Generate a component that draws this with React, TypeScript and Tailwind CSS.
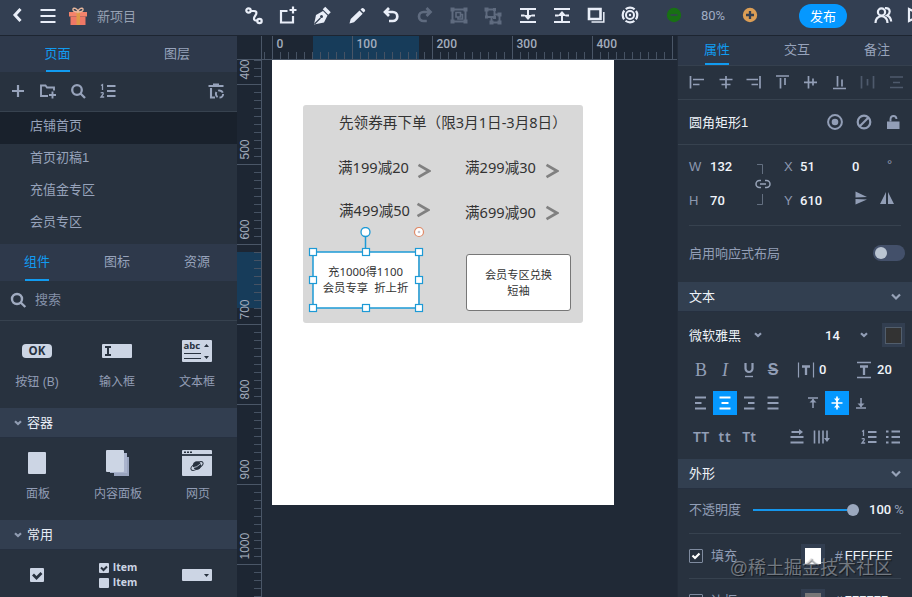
import React from 'react';
import { clsx } from 'clsx';

type IconProps = {
    children: React.ReactNode;
    className?: string;
    w?: number;
};

// Every glyph is drawn on a 24px grid at its real size
const Icon: React.FC<IconProps> = ({ children, className, w = 1.9 }) => (
    <svg width="24" height="24" viewBox="0 0 24 24" fill="none" stroke="currentColor" strokeWidth={w} className={clsx('shrink-0 overflow-visible', className)}>
        {children}
    </svg>
);

const solid = { fill: 'currentColor', stroke: 'none' };

const topTools = [
    { id: 'link', dim: false, art: <><circle cx="6.5" cy="6.5" r="2.200" strokeWidth="2.200" /><circle cx="17.500" cy="17" r="2.200" strokeWidth="2.200" /><path d="M8.700 7H12q3 0 2.200 3l-2 3.500q-.8 3 2 3H16" strokeWidth="2.200" /></> },
    { id: 'frame', dim: false, art: <path d="M11.500 7H5v11.500h12V12M17 2.500v7M13.500 6h7" strokeWidth="2.200" /> },
    { id: 'pen', dim: false, art: <><path d="M4 20.500l2-9.500 7-4 4.500 4.500-3.500 7z" {...solid} /><path d="M14 4l5.500 5.500" strokeWidth="3.500" /><path d="M4.500 20l6-6" stroke="#333f52" strokeWidth="1.200" /><circle cx="11.500" cy="12.500" r="1.500" fill="#333f52" stroke="none" /></> },
    { id: 'pencil', dim: false, art: <path d="M4.500 19.500l1.200-4.500 8.800-8.500 3.200 3.200-8.700 8.500zM15.500 5.500l1.300-1.200q1-.8 2 .2l1 1q.9 1-.1 1.900l-1.200 1.100z" {...solid} /> },
    { id: 'undo', dim: false, art: <path d="M10 4L6 8l4 4M6.500 8h7.300a4.500 4.500 0 0 1 0 9H10" strokeWidth="2.700" /> },
    { id: 'redo', dim: true, art: <path d="M13.500 4l4 4-4 4M17.500 8h-7a4.500 4.500 0 0 0 0 9h3.300" strokeWidth="2.700" /> },
    { id: 'group', dim: true, art: <><path d="M5.500 5.500h13v12h-13z" strokeWidth="2" /><path d="M3.500 3.500h4v4h-4zM16.500 3.500h4v4h-4zM3.500 15.500h4v4h-4zM16.500 15.500h4v4h-4z" {...solid} /><path d="M9 8.500h4.500V13H9zM14 10.500h1.500V15H11v-1.500" strokeWidth="1.600" /></> },
    { id: 'ungroup', dim: true, art: <><path d="M5.500 5.500h8v7.500h-8zM14 10.500h4.500v8h-8V14" strokeWidth="1.900" /><path d="M3.500 3.500h4v4h-4zM12 4h3v3h-3zM4 11.500h3v3H4zM12 12h3v3h-3zM16.500 8.500h4v4h-4zM8.500 16.500h4v4h-4zM16.500 16.500h4v4h-4z" {...solid} /></> },
    { id: 'bottom', dim: false, art: <><path d="M4 5h16M4 18h16M5 11.500h3.500M15.500 11.500H19M12 5v9" strokeWidth="2" /><path d="M7.500 11h9L12 16z" {...solid} /></> },
    { id: 'top', dim: false, art: <><path d="M4 5h16M4 18h16M5 11.500h3.500M15.500 11.500H19M12 9v9" strokeWidth="2" /><path d="M7.500 12h9L12 7z" {...solid} /></> },
    { id: 'shadow', dim: false, art: <><path d="M5 5h11.500v10H5z" strokeWidth="2.600" /><path d="M7.500 18h12.300V8" strokeWidth="1.500" /></> },
    { id: 'target', dim: false, art: <><circle cx="12" cy="11" r="7.300" strokeDasharray="9.500 1.967" strokeDashoffset="4.750" strokeWidth="2.200" /><circle cx="12" cy="11" r="4" strokeWidth="2" /><circle cx="12" cy="11" r="1.200" {...solid} /></> },
];

const alignTools = [
    { id: 'l', dim: false, art: <path d="M5.500 6v12.500M8 9.500h11M8 14.500h6.500" /> },
    { id: 'ch', dim: false, art: <path d="M12 6v12.500M5.500 9.500h13M7.500 14.500h9" /> },
    { id: 'r', dim: false, art: <path d="M18 6v12.500M4.500 9.500H16M9.500 14.500H16" /> },
    { id: 't', dim: false, art: <path d="M5 6h13M9.500 8v10.500M14 8v7" /> },
    { id: 'cv', dim: false, art: <path d="M5 12.300h13M9.500 6v12.500M14 8.500v7" /> },
    { id: 'b', dim: false, art: <path d="M5 18.500h13M9.500 6v10.500M14 9.500v7" /> },
    { id: 'dh', dim: true, art: <path d="M5.500 6v12.500M11.500 9v6.500M17.500 6v12.500" /> },
    { id: 'dv', dim: true, art: <path d="M5 7h13M8 12.500h7M5 17.500h13" /> },
];

const numberedList = (
    <>
        <path d="M11 7h8.500M11 12h8.500M11 17h8.500" strokeWidth="2" />
        <path d="M5 6.500l1.500-.8V11M4.700 13.800q3-.8 2.500 1.200L5 18h3.200" strokeWidth="1.300" />
    </>
);

const pages = ['店铺首页', '首页初稿1', '充值金专区', '会员专区'];

const SelectArrow = ({ className }: { className?: string }) => (
    <svg width="8" height="6" viewBox="0 0 8 6" fill="none" stroke="currentColor" strokeWidth="2.200" className={className}>
        <path d="M1 1.200l3 2.800 3-2.800" />
    </svg>
);

const Tab = ({ label, active, className }: { label: string; active?: boolean; className?: string }) => (
    <div className={clsx('flex items-end justify-center', className)}>
        <div className={clsx('flex h-full w-6 items-center justify-center border-b-2 whitespace-nowrap', active ? 'border-[#119bf0] text-[#119bf0]' : 'border-transparent text-[#97a3bb]')}>
            <span>{label}</span>
        </div>
    </div>
);

const TopBar = () => (
    <header className="flex h-9 shrink-0 items-start overflow-hidden border-b border-[#1d2531] bg-[#333f52] text-[#e9eef8]">
        <div className="flex h-8 w-[237px] shrink-0 items-center pl-[5px]">
            <Icon w={3}><path d="M15.500 5L10 11l5.500 6" /></Icon>
            <Icon className="ml-[7px]" w={2.100}><path d="M4.500 6h15M4.500 12h15M4.500 18h15" /></Icon>
            <Icon className="ml-[6px]">
                <path d="M3 8h18v4.500H3z" fill="#f4836b" stroke="none" />
                <path d="M4.500 12.500h15V21h-15z" fill="#ef7866" stroke="none" />
                <path d="M10.500 8h3.500v13h-3.500z" fill="#e09a48" stroke="none" />
                <path d="M12 8C8 8 6.500 6.500 7 5s4-1 5 2.500C13 4 16.500 3.500 17 5s-1 3-5 3z" stroke="#e8b79c" strokeWidth="1.400" />
            </Icon>
            <span className="ml-[7px] text-[#97a1b3]">新项目</span>
        </div>
        <div className="flex h-8 w-[410px] shrink-0 items-center">
            {topTools.map(t => (
                <div key={t.id} className={clsx('flex w-[34.2px] shrink-0 justify-center', t.dim && 'text-[#5f6b7f]')}>
                    <Icon>{t.art}</Icon>
                </div>
            ))}
        </div>
        <div className="flex h-8 shrink-0 items-center pl-[15px]">
            <Icon><circle cx="12" cy="11" r="7.200" fill="#187014" stroke="none" /><path d="M8.500 11h7" stroke="#2f4a45" strokeWidth="2" /></Icon>
            <span className="ml-[15px] w-[28px] pb-px font-[Roboto] text-[13px] text-[#a0acc2]">80%</span>
            <Icon className="ml-[9px]"><circle cx="12" cy="11" r="7.200" fill="#dc9e55" stroke="none" /><path d="M8 11h8M12 7v8" stroke="#333f52" strokeWidth="2.300" /></Icon>
            <button className="ml-[37px] h-6 w-12 rounded-full bg-[#0598ff] text-[13px] text-white">发布</button>
            <Icon className="ml-6" w={2.200}>
                <circle cx="10.500" cy="8" r="3.600" />
                <path d="M4.500 19q0-6 6-7 6 1 6 7" />
                <path d="M14 4.200q4.500-.5 4.700 3.300 0 2.500-2.500 4 3.500 1.500 4 6" />
            </Icon>
            <Icon className="ml-[8px]"><path d="M6 5v12l12-6z" strokeWidth="2.200" /></Icon>
        </div>
    </header>
);

const Widget = ({ label, children }: { label?: string; children: React.ReactNode }) => (
    <div className="flex w-20 flex-col items-center text-xs text-[#929db5]">
        <div className="flex h-[30px] items-center justify-center text-[#ccd5e4]">{children}</div>
        {label && <span className="mt-2 leading-4 whitespace-nowrap">{label}</span>}
    </div>
);

const GroupTitle = ({ label }: { label: string }) => (
    <div className="flex h-[30px] shrink-0 items-center border-b border-[#263040] bg-[#323e50] pl-[14px] text-[#e8edf6]">
        <SelectArrow className="text-[#909cb2]" />
        <span className="ml-[5px]">{label}</span>
    </div>
);

const LeftPanel = () => (
    <aside className="flex w-[237px] shrink-0 flex-col overflow-hidden bg-[#28323f] text-[#97a3bb]">
        <div className="flex h-9 shrink-0 bg-[#2e394b]">
            <Tab label="页面" active className="w-[115px]" />
            <Tab label="图层" className="w-[122px] pl-[2px]" />
        </div>
        <div className="flex h-10 shrink-0 items-center border-b border-[#37424f] pb-0.5 pl-[6px]">
            <Icon w={2.200}><path d="M12 6v12M6 12h12" /></Icon>
            <Icon className="ml-[6px]"><path d="M12 17H5V6.500h4.500l1.500 2H18v3M16.500 12.500v7M13 16h7" /></Icon>
            <Icon className="ml-[6px]" w={2.300}><circle cx="11" cy="11" r="4.800" /><path d="M14.500 14.500l4.500 4.500" /></Icon>
            <Icon className="ml-[6px]">{numberedList}</Icon>
            <Icon className="ml-[84px]">
                <path d="M4.500 7h15M9 5.500h6M7 9v9.500h4" strokeWidth="2.100" />
                <circle cx="15.500" cy="15" r="3.600" strokeWidth="2" strokeDasharray="5.500 2.040" />
            </Icon>
        </div>
        <div className="flex h-[132px] shrink-0 flex-col">
            {pages.map((p, i) => (
                <div key={p} className={clsx('flex h-8 shrink-0 items-center pb-[6px] pl-[30px]', i === 0 && 'bg-[#19212c]')}>{p}</div>
            ))}
        </div>
        <div className="flex h-[37px] shrink-0 bg-[#2e394b]">
            <Tab label="组件" active className="w-[74px]" />
            <Tab label="图标" className="w-[86px]" />
            <Tab label="资源" className="w-[74px]" />
        </div>
        <div className="flex h-10 shrink-0 items-center border-b border-[#37424f] pb-0.5 pl-[6px] text-[#8490a8]">
            <Icon w={2.400} className="text-[#a0abc0]"><circle cx="11" cy="11" r="5" /><path d="M14.700 14.500l4.600 4.500" /></Icon>
            <span className="ml-[5px]">搜索</span>
        </div>
        <div className="-ml-[3px] flex h-[87px] w-60 shrink-0 pt-[15px]">
            <Widget label="按钮 (B)">
                <div className="flex h-[14px] w-[30px] items-center justify-center rounded-sm bg-[#ccd5e4] font-['Open_Sans'] text-[11.5px] font-bold text-[#28323f]">OK</div>
            </Widget>
            <Widget label="输入框">
                <svg width="30" height="14"><rect width="30" height="14" rx="1" fill="#ccd5e4" /><path d="M3 3h6M3 11h6M6 3v8" stroke="#28323f" strokeWidth="2" /></svg>
            </Widget>
            <Widget label="文本框">
                <div className="mr-px flex h-[22px] w-[30px] rounded-[1px] bg-[#ccd5e4] pl-[2px]">
                    <div className="w-[17px]">
                        <div className="-mt-px h-[14px] font-['Open_Sans'] text-[9.5px] leading-[14px] font-bold text-[#28323f]">abc</div>
                        <div className="h-[6px] border-y border-[#28323f]" />
                    </div>
                    <svg width="11" height="22"><path d="M3 7h5L5.500 4zM3 16h5l-2.500 3z" fill="#28323f" /></svg>
                </div>
            </Widget>
        </div>
        <GroupTitle label="容器" />
        <div className="-ml-[2px] flex h-[82px] w-60 shrink-0 pt-[10px]">
            <Widget label="面板"><div className="mr-[2px] h-[22px] w-[18px] rounded-[1px] bg-[#ccd5e4]" /></Widget>
            <Widget label="内容面板">
                <svg width="24" height="26"><path d="M8 7h15v19H8z" fill="#9aa5bf" /><path d="M4 3h17v20H4z" fill="#aab4cd" /><rect width="18" height="22" rx="1" fill="#ccd5e4" /></svg>
            </Widget>
            <Widget label="网页">
                <svg width="30" height="26" className="mr-[3px]">
                    <rect width="30" height="26" rx="1" fill="#ccd5e4" />
                    <path d="M0 5h30" stroke="#28323f" strokeWidth="1.800" />
                    <path d="M2 2.200h8" stroke="#28323f" strokeWidth="1.500" strokeDasharray="2 1" />
                    <circle cx="15" cy="15.500" r="4.200" fill="#28323f" />
                    <ellipse cx="15" cy="16" rx="6.800" ry="2.800" transform="rotate(-30 15 16)" fill="none" stroke="#28323f" />
                    <path d="M10 18q5-.5 9-4.500" stroke="#ccd5e4" fill="none" strokeWidth=".8" />
                </svg>
            </Widget>
        </div>
        <GroupTitle label="常用" />
        <div className="-ml-[3px] flex w-60 shrink-0 pt-[10px]">
            <Widget><svg width="14" height="14"><rect width="14" height="14" rx="1" fill="#ccd5e4" /><path d="M3 6.500l3.500 3.500L11.500 5" stroke="#28323f" strokeWidth="2.700" fill="none" /></svg></Widget>
            <Widget>
                <div className="ml-[2px] flex flex-col font-['Open_Sans'] text-[10.5px] leading-[15px] font-bold">
                    <div className="flex items-center gap-1"><svg width="10" height="10"><rect width="10" height="10" rx="1" fill="#ccd5e4" /><path d="M2 4.500L4.500 7 8 3.500" stroke="#28323f" strokeWidth="2" fill="none" /></svg>Item</div>
                    <div className="flex items-center gap-1"><span className="h-[10px] w-[10px] rounded-[1px] bg-[#ccd5e4]" />Item</div>
                </div>
            </Widget>
            <Widget><svg width="30" height="12" className="mr-px"><rect width="30" height="12" rx="1" fill="#ccd5e4" /><path d="M22 5h5l-2.500 3z" fill="#28323f" /></svg></Widget>
        </div>
    </aside>
);

const hTicks = Array.from({ length: 52 }, (_, i) => 27.5 + i * 8);
const vTicks = Array.from({ length: 68 }, (_, i) => 0.5 + i * 8);

const HRuler = () => (
    <svg width="440" height="24" className="block bg-[#1d2633]">
        <rect x="76" width="106" height="23" fill="#173c5a" />
        {hTicks.map(x => <path key={x} d={`M${x} 16v7`} stroke="#465263" />)}
        {[0, 1, 2, 3, 4, 5].map(n => (
            <g key={n}>
                <path d={`M${35.5 + n * 80} 0v23`} stroke="#4a5667" />
                {n < 5 && <text x={39.5 + n * 80} y="12" fill="#a3adbd" fontSize="12" fontWeight="500" fontFamily="Roboto, sans-serif">{n * 100}</text>}
            </g>
        ))}
        <path d="M0 23.500h440M24.500 0v24" stroke="#4a5667" />
    </svg>
);

const VRuler = () => (
    <svg width="25" height="537" className="block shrink-0 bg-[#1d2633]">
        <rect y="192" width="24" height="56" fill="#173c5a" />
        {vTicks.map(y => <path key={y} d={`M17 ${y}h7`} stroke="#465263" />)}
        {[400, 500, 600, 700, 800, 900, 1000].map((n, i) => (
            <g key={n}>
                <path d={`M0 ${24.5 + i * 80}h24`} stroke="#4a5667" />
                <text transform={`translate(12 ${19.5 + i * 80}) rotate(-90)`} fill="#a3adbd" fontSize="12" fontFamily="Liberation Sans, sans-serif">{n}</text>
            </g>
        ))}
        <path d="M24.500 0v537" stroke="#4a5667" />
    </svg>
);

// Positions are in px from the page's top left corner
const coupons = [
    { text: '满199减20', pos: 'left-[66px] top-[97px]', arrow: 'left-[145px] top-[103px]' },
    { text: '满299减30', pos: 'left-[193px] top-[97px]', arrow: 'left-[273px] top-[103px]' },
    { text: '满499减50', pos: 'left-[67px] top-[140px]', arrow: 'left-[144px] top-[142px]' },
    { text: '满699减90', pos: 'left-[193px] top-[142px]', arrow: 'left-[273px] top-[145px]' },
];

const handles = [[9, 25], [62, 25], [115, 25], [9, 53], [115, 53], [9, 81], [62, 81], [115, 81]];

const Artboard = () => (
    <div className="relative ml-[10px] h-[445px] w-[342px] bg-white font-['Noto_Sans','Noto_Sans_CJK_SC',sans-serif] text-[14.6px] text-[#333]">
        <div className="absolute top-[45px] left-[31px] h-[218px] w-[280px] rounded-[3px] bg-[#d8d8d8]" />
        <div className="absolute top-[52px] left-[67px] leading-5 whitespace-nowrap">先领券再下单（限3月1日-3月8日）</div>
        {coupons.map(c => (
            <React.Fragment key={c.text}>
                <div className={clsx('absolute leading-5 whitespace-nowrap', c.pos)}>{c.text}</div>
                <svg width="14" height="16" className={clsx('absolute', c.arrow)} fill="none" stroke="#808080" strokeWidth="2.700"><path d="M1.500 1.800L12 8 1.500 14.200" /></svg>
            </React.Fragment>
        ))}
        <div className="absolute top-[192px] left-[41px] flex h-14 w-[105px] items-center justify-center bg-white text-center text-[11.4px] leading-4 whitespace-pre">{'充1000得1100\n会员专享  折上折'}</div>
        <div className="absolute top-[194px] left-[194px] flex h-[57px] w-[105px] items-center justify-center rounded-[3px] border border-[#777] bg-white text-center text-[11.2px] leading-4">会员专区兑换<br />短袖</div>
        <svg width="126" height="90" className="absolute top-[167px] left-[32px]" fill="white" stroke="#1d9ad6" strokeWidth="1.500">
            <path d="M9 25h106v56H9zM61.500 9v16" fill="none" />
            <circle cx="61.500" cy="5" r="4.500" strokeWidth="1.300" />
            <circle cx="115" cy="5" r="4.500" stroke="#e08a68" strokeWidth="1.200" />
            <circle cx="115" cy="5" r="1.300" fill="#c5c5d0" stroke="none" />
            {handles.map(([x, y]) => <rect key={`${x}-${y}`} x={x - 3.5} y={y - 3.5} width="7" height="7" strokeWidth="1.200" />)}
        </svg>
    </div>
);

const Canvas = () => (
    <section className="w-[440px] shrink-0 overflow-hidden bg-[#202936]">
        <HRuler />
        <div className="flex">
            <VRuler />
            <Artboard />
        </div>
    </section>
);

const Value = ({ children, className }: { children: React.ReactNode; className?: string }) => (
    <span className={clsx('font-[Roboto] text-[13px] font-medium text-[#f0f4fa]', className)}>{children}</span>
);

const Field = ({ name, value, wide }: { name: string; value: string; wide?: boolean }) => (
    <div className="flex h-[34px] items-center">
        <span className={clsx('text-[#8c98b0]', wide ? 'w-[21px]' : 'w-4')}>{name}</span>
        <Value>{value}</Value>
    </div>
);

const SectionTitle = ({ label }: { label: string }) => (
    <div className="flex h-[30px] shrink-0 items-center justify-between border-b border-[#263040] bg-[#323f50] pr-[10px] pl-[11px] text-[#eef2f8]">
        <span>{label}</span>
        <svg width="12" height="8" fill="none" stroke="#97a3b8" strokeWidth="2.200"><path d="M2 1.500l4 4 4-4" /></svg>
    </div>
);

const lines = {
    left: <path d="M6 6.500h11M6 12h6.500M6 17.500h11" />,
    center: <path d="M6.500 6.500h11M8.500 12h7M6.500 17.500h11" />,
    right: <path d="M7 6.500h10.500M11 12h6.500M7 17.500h10.500" />,
    full: <path d="M6.500 6.500h11M6.500 12h11M6.500 17.500h11" />,
};

const RightPanel = () => (
    <aside className="flex w-[235px] shrink-0 flex-col overflow-hidden border-l border-[#232c39] bg-[#28323f] text-[#929eb6]">
        <div className="-ml-[1px] flex h-[30px] w-60 shrink-0 border-b border-[#35404e] bg-[#2d3849]">
            <Tab label="属性" active className="w-20" />
            <Tab label="交互" className="w-20" />
            <Tab label="备注" className="w-20" />
        </div>
        <div className="flex h-[34px] shrink-0 items-center border-b border-[#37424f] pb-0.5 pl-[5px]">
            {alignTools.map(t => (
                <div key={t.id} className={clsx('flex w-[28.5px] shrink-0 justify-center', t.dim && 'text-[#4e5a6c]')}>
                    <Icon w={1.7}>{t.art}</Icon>
                </div>
            ))}
        </div>
        <div className="flex h-[45px] shrink-0 items-center border-b border-[#37424f] pl-[11px]">
            <span className="w-[134px] text-[#eef2f8]">圆角矩形1</span>
            <Icon w={2}><circle cx="12" cy="12" r="6.900" /><circle cx="12" cy="12" r="3.300" {...solid} /></Icon>
            <Icon w={2.200} className="ml-[5px]"><circle cx="12" cy="12" r="6.300" /><path d="M7.500 16.500l9-9" /></Icon>
            <Icon className="ml-[5px]"><path d="M6 11.500h12.500V19H6z" {...solid} /><path d="M9.500 11.500V9q.2-3 3-3t3 3" /></Icon>
        </div>
        <div className="mx-[11px] flex h-[81px] shrink-0 border-b border-[#37424f] pt-1 text-[13px]">
            <div className="w-[62px]">
                <Field name="W" value="132" wide />
                <Field name="H" value="70" wide />
            </div>
            <svg width="26" height="68" fill="none" stroke="#6a7688">
                <path d="M6 15.500h5.500V25M11.500 45v10.500H6" strokeWidth=".9" />
                <path d="M10 31.500H8.500a3.500 3.500 0 0 0 0 7H10M14 31.500h1.500a3.500 3.500 0 0 1 0 7H14M9 35h6" stroke="#97a3b8" strokeWidth="1.500" />
            </svg>
            <div className="w-[75px] pl-[7px]">
                <Field name="X" value="51" />
                <Field name="Y" value="610" />
            </div>
            <div>
                <div className="flex h-[34px] items-center"><Value className="w-[35px]">0</Value><span className="pb-1">°</span></div>
                <div className="flex h-[34px] items-center pb-1">
                    <Icon className="-ml-[3px]"><path d="M6.500 5.500v6l11.500-.500zM6.500 18.500v-5.500l11.500.5z" {...solid} /></Icon>
                    <Icon className="ml-[2px]"><path d="M11 6v12H5zM13 6v12h6z" {...solid} /></Icon>
                </div>
            </div>
        </div>
        <div className="flex h-14 shrink-0 items-center justify-between pr-[7px] pb-0.5 pl-[11px]">
            <span>启用响应式布局</span>
            <div className="h-4 w-8 rounded-full bg-[#43506a] p-[2px]"><div className="h-3 w-3 rounded-full bg-[#bac5d2]" /></div>
        </div>
        <SectionTitle label="文本" />
        <div className="flex h-[46px] shrink-0 items-center pl-[11px] text-[#eef2f8]">
            <span>微软雅黑</span>
            <SelectArrow className="ml-[13px] text-[#929eb6]" />
            <Value className="ml-[63px] w-[27px]">14</Value>
            <SelectArrow className="ml-2 text-[#929eb6]" />
            <div className="ml-[14px] flex h-6 w-[23px] items-center justify-center bg-[#323e50]"><div className="h-[17px] w-[17px] border border-[#525e6c] bg-[#333]" /></div>
        </div>
        <div className="flex h-[23px] shrink-0 items-center pl-[11px]">
            <span className="w-6 text-center font-['Liberation_Serif',serif] text-[18px]">B</span>
            <span className="w-6 text-center font-['Liberation_Serif',serif] text-[18px] italic">I</span>
            <Icon><path d="M8.500 5v5.500a3.500 3.500 0 0 0 7 0V5" strokeWidth="2.200" /><path d="M8 18.500h8" strokeWidth="1.400" /></Icon>
            <span className="w-6 text-center text-[16px] font-bold line-through">S</span>
            <Icon className="ml-[9px]" w={1.2}><path d="M4.500 4.500v15M19.500 4.500v15" /><path d="M8 8.500h8M12 8.500V17" strokeWidth="2.300" /></Icon>
            <Value className="ml-[1px] w-[33px] pb-px">0</Value>
            <Icon w={1.300}><path d="M5 4.500h14M5 19.500h14" /><path d="M8 8.500h8M12 8.500V17" strokeWidth="2.300" /></Icon>
            <Value className="ml-[1px] pb-px">20</Value>
        </div>
        <div className="mt-[10px] flex h-6 shrink-0 items-center pl-[11px]">
            <Icon>{lines.left}</Icon>
            <div className="bg-[#0598ff] text-white"><Icon w={2}>{lines.center}</Icon></div>
            <Icon>{lines.right}</Icon>
            <Icon>{lines.full}</Icon>
            <Icon className="ml-4" w={1.500}><path d="M7 7h10M12 8v9" /><path d="M8.500 11.500L12 8l3.500 3.500z" {...solid} /></Icon>
            <div className="bg-[#0598ff] text-white"><Icon w={1.700}><path d="M6.500 12h11M12 5.500v13" /><path d="M9 7.500h6l-3 3.500zM9 16.500h6L12 13z" {...solid} /></Icon></div>
            <Icon w={1.500}><path d="M7 17h10M12 7v9" /><path d="M8.500 12.500L12 16l3.500-3.500z" {...solid} /></Icon>
        </div>
        <div className="mt-[10px] mb-[10px] flex h-6 shrink-0 items-center pl-[11px] font-['Noto_Sans'] text-[14px] font-semibold">
            <span className="w-6 text-center">TT</span>
            <span className="w-6 text-center tracking-wider">tt</span>
            <span className="w-6 text-center">Tt</span>
            <Icon className="ml-6"><path d="M5.500 12h13M5.500 17.500h13M6.500 7H15" /><path d="M14 4l4 3-4 3z" {...solid} /></Icon>
            <Icon><path d="M5.500 5.500v13M10 5.500v13M14 5.500v13M18 5.500v9" strokeWidth="1.600" /><path d="M15 13h6l-3 4z" {...solid} /></Icon>
            <Icon className="ml-6">{numberedList}</Icon>
            <Icon w={2}><path d="M5 6.500h2.500M10.500 6.500H19M5 12h2.500M10.500 12H19M5 17.500h2.500M10.500 17.500H19" /></Icon>
        </div>
        <SectionTitle label="外形" />
        <div className="mx-[11px] flex h-[45px] shrink-0 items-center border-b border-[#37424f] pb-[3px]">
            <span className="shrink-0 whitespace-nowrap">不透明度</span>
            <div className="ml-3 flex w-[106px] shrink-0 items-center">
                <div className="h-[2px] flex-1 bg-[#1596ec]" />
                <div className="h-3 w-3 rounded-full bg-[#9ba8be]" />
            </div>
            <Value className="ml-[10px]">100</Value>
            <span className="ml-[3px] font-[Roboto]">%</span>
        </div>
        {[{ name: '填充', hex: 'FFFFFF', on: true, swatch: 'bg-white' }, { name: '边框', hex: '777777', on: false, swatch: 'bg-[#777]' }].map(r => (
            <div key={r.name} className="mx-[11px] flex h-[45px] shrink-0 items-center border-b border-[#37424f] pb-px">
                <div className="flex h-[14px] w-[14px] items-center justify-center rounded-[1px] border border-[#7f8b9f] text-white">
                    {r.on && <svg width="10" height="10" fill="none" stroke="currentColor" strokeWidth="2.200"><path d="M1.500 4.500L4 7l4.500-4.500" /></svg>}
                </div>
                <span className="ml-2">{r.name}</span>
                <div className="ml-[64px] flex h-6 w-6 items-center justify-center bg-[#323e50]"><div className={clsx('h-4 w-4', r.swatch)} /></div>
                <span className="ml-[10px] text-[14px]">#</span>
                <span className="ml-[2px] text-[13px] text-[#eef2f8]">{r.hex}</span>
            </div>
        ))}
    </aside>
);

const App: React.FC = () => (
    <main className="relative flex h-[597px] w-[912px] flex-col overflow-hidden bg-[#202936] font-['Liberation_Sans','Noto_Sans_CJK_SC',sans-serif] text-[13px] leading-none">
        <TopBar />
        <div className="flex min-h-0 flex-1">
            <LeftPanel />
            <Canvas />
            <RightPanel />
        </div>
        <div className="pointer-events-none absolute right-[20px] bottom-[17px] text-[18px] leading-6 whitespace-nowrap text-[#c8cbd0]/50 [text-shadow:1px_1px_1px_rgba(0,0,0,0.5)]">@稀土掘金技术社区</div>
    </main>
);

export default App;
